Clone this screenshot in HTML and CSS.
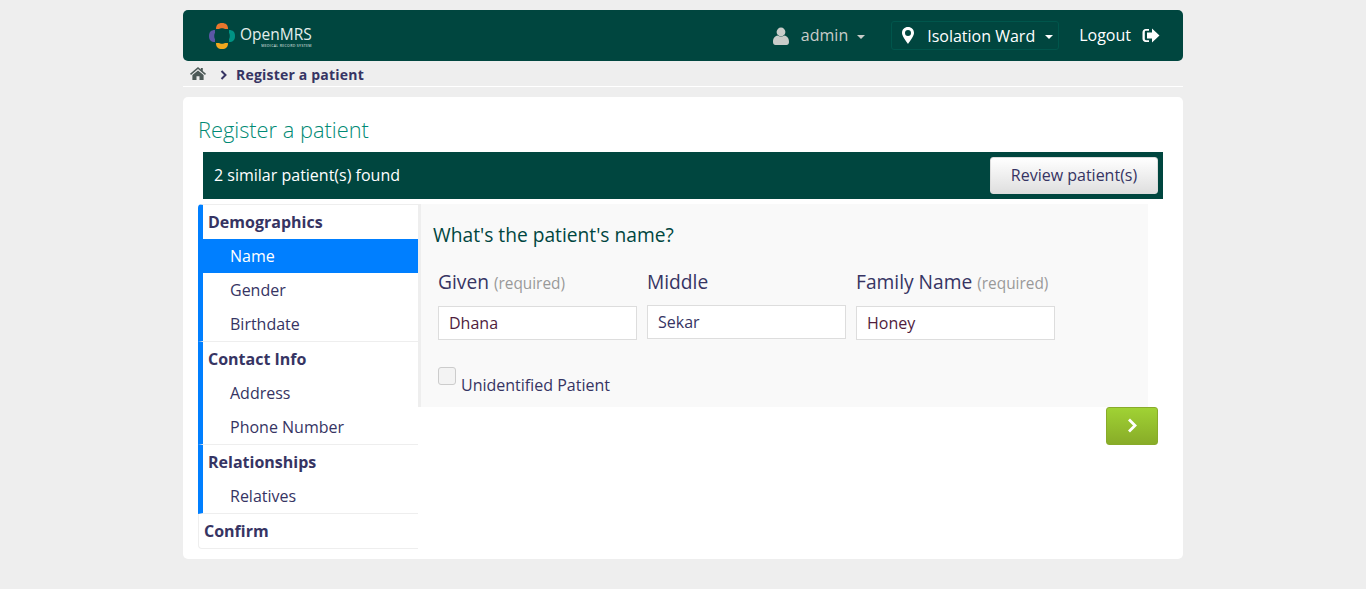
FILE: index.html
```html
<!DOCTYPE html>
<html lang="en">
  <head>
    <meta charset="UTF-8" />
    <title>Register a patient</title>
    <link rel="stylesheet" href="styles.css">
  </head>
  <body>
    <div class="page">
      <header class="topbar">
        <a class="logo">
          <svg width="28" height="28" viewBox="0 0 28 28">
            <path d="M8 7 C8 3 10 1 14 1 C18 1 20 3 20 7 L17 7 C16 6 12 6 11 7 Z" fill="#e9762d"/>
            <path d="M21 8 C25 8 27 10 27 14 C27 18 25 20 21 20 L21 17 C22 16 22 12 21 11 Z" fill="#009384"/>
            <path d="M8 21 C8 25 10 27 14 27 C18 27 20 25 20 21 L17 21 C16 22 12 22 11 21 Z" fill="#f1a81e"/>
            <path d="M7 8 C3 8 1 10 1 14 C1 18 3 20 7 20 L7 17 C6 16 6 12 7 11 Z" fill="#5b57a6"/>
          </svg>
          <span class="logo-text">
            <span class="logo-name">OpenMRS</span>
            <span class="logo-sub">MEDICAL RECORD SYSTEM</span>
          </span>
        </a>
        <div class="topbar-right">
          <div class="user">
            <svg width="16" height="18" viewBox="0 0 16 18"><circle cx="8" cy="5" r="4.4" fill="#c9ccc9"/><path d="M0 15 C0 11 2 9 4.5 8.5 C6.5 10 9.500 10 11.500 8.500 C14 9 16 11 16 15 C16 17 15 18 13.500 18 L2.500 18 C1 18 0 17 0 15 Z" fill="#c9ccc9"/></svg>
            <span class="user-name">admin</span>
            <span class="caret caret-dim"></span>
          </div>
          <div class="location">
            <svg width="12" height="17" viewBox="0 0 12 17"><path fill-rule="evenodd" d="M6 0 C9.500 0 12 2.500 12 6 C12 9 8 14 6 17 C4 14 0 9 0 6 C0 2.500 2.500 0 6 0 Z M6 3 A3 3 0 1 0 6 9 A3 3 0 1 0 6 3 Z" fill="#fff"/></svg>
            <span class="location-name">Isolation Ward</span>
            <span class="caret"></span>
          </div>
          <div class="logout">
            <span class="logout-text">Logout</span>
            <svg width="18" height="15" viewBox="0 0 17 15"><path d="M6.500 1 L6.500 2.800 L3.500 2.800 C2.800 2.800 2.300 3.300 2.300 4 L2.300 11 C2.300 11.700 2.800 12.200 3.500 12.200 L6.500 12.200 L6.500 14 L3.200 14 C1.400 14 0 12.600 0 10.800 L0 4.200 C0 2.400 1.400 1 3.200 1 Z" fill="#fff"/><path d="M9.500 0.500 L17 7.500 L9.500 14.500 L9.500 10.500 L4.500 10.500 L4.500 4.500 L9.500 4.500 Z" fill="#fff"/></svg>
          </div>
        </div>
      </header>

      <nav class="crumbs">
        <svg class="crumb-home" width="16" height="13" viewBox="0 0 16 13"><path d="M8 0 L10.800 2.400 L10.800 1 L12.800 1 L12.800 4.100 L16 6.800 L15 8 L8 2.100 L1 8 L0 6.800 Z" fill="#4d5a58"/><path d="M8 3.400 L13.600 8.100 L13.600 13 L9.500 13 L9.500 9.300 L6.500 9.300 L6.500 13 L2.400 13 L2.400 8.100 Z" fill="#4d5a58"/></svg>
        <svg class="crumb-sep" width="7" height="10" viewBox="0 0 7 10"><path d="M1.500 1 L5.500 5 L1.500 9" fill="none" stroke="#363463" stroke-width="2"/></svg>
        <span class="crumb-current">Register a patient</span>
      </nav>

      <main class="card">
        <h2 class="title">Register a patient</h2>
        <div class="similar">
          <span class="similar-text">2 similar patient(s) found</span>
          <button class="review">Review patient(s)</button>
        </div>

        <div class="wizard">
          <ul class="steps">
            <li class="section">
              <div class="section-name">Demographics</div>
              <div class="step active">Name</div>
              <div class="step">Gender</div>
              <div class="step">Birthdate</div>
            </li>
            <li class="section">
              <div class="section-name">Contact Info</div>
              <div class="step">Address</div>
              <div class="step">Phone Number</div>
            </li>
            <li class="section">
              <div class="section-name">Relationships</div>
              <div class="step">Relatives</div>
            </li>
            <li class="section confirm">
              <div class="section-name">Confirm</div>
            </li>
          </ul>

          <div class="form-col">
            <form class="question">
              <h3>What's the patient's name?</h3>
              <div class="fields">
                <div class="field">
                  <label>Given <em>(required)</em></label>
                  <input type="text" value="Dhana" />
                </div>
                <div class="field field-mid">
                  <label>Middle</label>
                  <input type="text" value="Sekar" />
                </div>
                <div class="field">
                  <label>Family Name <em>(required)</em></label>
                  <input type="text" value="Honey" />
                </div>
              </div>
              <div class="unknown">
                <span class="check"></span>
                <span>Unidentified Patient</span>
              </div>
            </form>
            <div class="next-row">
              <button class="next">
                <svg width="11" height="15" viewBox="0 0 11 15"><path d="M2 1.500 L8 7.500 L2 13.500" fill="none" stroke="#fff" stroke-width="2.800"/></svg>
              </button>
            </div>
          </div>
        </div>
      </main>
    </div>
  </body>
</html>
```

FILE: styles.css
```css
/* Page */
* {
  box-sizing: border-box;
}
body {
  margin: 0;
  height: 589px;
  overflow: hidden;
  background: #eeeeee;
  font-family: "Open Sans", sans-serif;
  color: #363463;
}
.page {
  width: 1000px;
  margin: 0 auto;
  padding-top: 10px;
}

/* Header */
.topbar {
  height: 51px;
  background: #00463f;
  border-radius: 5px;
  display: flex;
  align-items: center;
  justify-content: space-between;
  padding: 0 23px 0 25px;
}
.logo {
  display: flex;
  align-items: center;
  gap: 4px;
}
.logo-text {
  display: flex;
  flex-direction: column;
  padding-top: 2px;
  color: #e4efec;
  line-height: 1;
}
.logo-name {
  font-size: 15.5px;
  line-height: 18px;
  font-weight: 400;
}
.logo-sub {
  font-size: 3.500px;
  line-height: 5px;
  letter-spacing: 0.35px;
  text-align: right;
  white-space: nowrap;
}
.topbar-right {
  display: flex;
  align-items: center;
  font-size: 16px;
  color: #fff;
}
.user {
  display: flex;
  align-items: center;
  color: #c9ccc9;
  margin-right: 26px;
}
.user-name {
  margin-left: 12px;
  margin-right: 9px;
  padding-bottom: 2px;
}
.caret {
  display: inline-block;
  width: 0;
  height: 0;
  margin-top: 3px;
  border-left: 4px solid transparent;
  border-right: 4px solid transparent;
  border-top: 4px solid #fff;
}
.caret-dim {
  border-top-color: #c9ccc9;
}
.location {
  width: 168px;
  height: 29px;
  display: flex;
  align-items: center;
  padding-left: 10px;
  border: 1px solid #00564c;
  border-radius: 3px;
}
.location-name {
  margin-left: 13px;
  margin-right: 10px;
}
.logout {
  display: flex;
  align-items: center;
  gap: 11px;
  margin-left: 20px;
}
.logout-text {
  padding-bottom: 2px;
}

/* Breadcrumbs */
.crumbs {
  height: 26px;
  display: flex;
  align-items: center;
  padding: 2px 0 0 7px;
  border-bottom: 1px solid #fff;
  font-size: 14px;
  font-weight: 700;
  letter-spacing: 0.2px;
}
.crumb-home {
  margin-top: -2px;
}
.crumb-sep {
  margin-left: 14px;
  margin-right: 9px;
}

/* Card */
.card {
  margin-top: 10px;
  height: 462px;
  background: #fff;
  border-radius: 5px;
  padding: 20px 15px 0;
}
.title {
  margin: 0;
  font-size: 21.8px;
  line-height: 25px;
  font-weight: 300;
  color: #008a74;
}
.similar {
  height: 47px;
  margin: 10px 5px 5px;
  padding: 0 5px 0 11px;
  background: #00463f;
  display: flex;
  align-items: center;
  justify-content: space-between;
  color: #fff;
  font-size: 16px;
}
.similar-text {
  padding-bottom: 2px;
}
.review {
  width: 168px;
  height: 37px;
  padding: 0 0 2px;
  border: 1px solid #ddd;
  border-radius: 3px;
  background: linear-gradient(#ffffff, #dfdfdf);
  font-family: inherit;
  font-size: 16px;
  color: #363463;
}

/* Wizard */
.wizard {
  display: flex;
}
.steps {
  width: 220px;
  margin: 0;
  padding: 0;
  list-style: none;
  flex-shrink: 0;
}
.section {
  border-left: 5px solid #007fff;
  border-bottom: 1px solid #eeeeee;
}
.section:first-child {
  border-top: 1px solid #eeeeee;
  border-top-left-radius: 4px;
}
.section-name {
  height: 34px;
  line-height: 34px;
  padding-left: 5px;
  font-size: 16px;
  font-weight: 700;
}
.step {
  height: 34px;
  line-height: 34px;
  padding-left: 27px;
  font-size: 16px;
}
.step.active {
  background: #007fff;
  color: #fff;
}
.section.confirm {
  border-left: 1px solid #eeeeee;
  border-bottom-left-radius: 4px;
}
.form-col {
  width: 730px;
}
.question {
  height: 203px;
  background: #f9f9f9;
  border-left: 3px solid #eeeeee;
  padding: 18px 0 0 12px;
}
.question h3 {
  margin: 0;
  font-size: 19.2px;
  line-height: 25px;
  font-weight: 400;
  color: #00463f;
}
.fields {
  display: flex;
  gap: 10px;
  margin: 21px 0 0 5px;
}
.field {
  width: 199px;
}
.field label {
  display: block;
  height: 38px;
  font-size: 19.2px;
  line-height: 27px;
  white-space: nowrap;
}
.field em {
  font-style: normal;
  font-size: 15.4px;
  color: #999999;
}
.field input {
  display: block;
  width: 199px;
  height: 34px;
  padding: 0 10px;
  border: 1px solid #dddddd;
  background: #fff;
  font-family: inherit;
  font-size: 16px;
  color: #501d3d;
}
.field-mid input {
  margin-top: -1px;
  color: #363463;
}
.unknown {
  display: flex;
  align-items: flex-end;
  gap: 5px;
  margin: 27px 0 0 5px;
  font-size: 16px;
  line-height: 22px;
}
.check {
  width: 18px;
  height: 18px;
  margin-bottom: 11px;
  background: #f3f3f3;
  border: 1px solid #cccccc;
  border-radius: 3px;
}
.next-row {
  display: flex;
  justify-content: flex-end;
  margin-right: -10px;
}
.next {
  width: 52px;
  height: 38px;
  padding: 0 0 2px;
  display: flex;
  align-items: center;
  justify-content: center;
  border: 1px solid #88ab2a;
  border-radius: 3px;
  background: linear-gradient(#a0d234, #88ac28);
}
```
